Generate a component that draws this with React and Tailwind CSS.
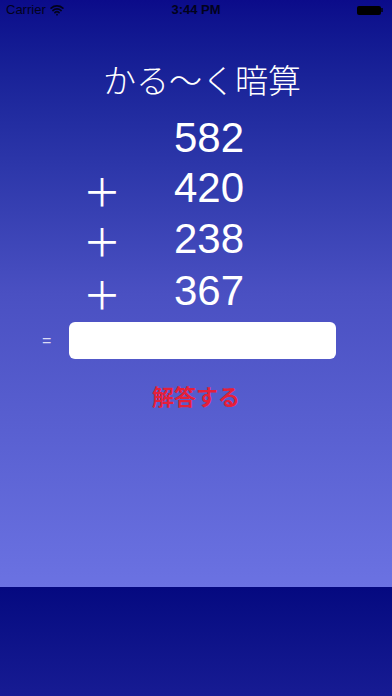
import { Wifi } from 'lucide-react'

const rows = [
  { sign: false, value: '582', h: 'h-[50px]' },
  { sign: true, value: '420', h: 'h-[50px]' },
  { sign: true, value: '238', h: 'h-[51px]' },
  { sign: true, value: '367', h: 'h-[54px]' },
]

const StatusBar = () => (
  <div className="flex h-[20px] items-center justify-between px-[6px] text-[13px] text-black" style={{ fontFamily: '"Liberation Sans", sans-serif' }}>
    <div className="flex w-[100px] items-center gap-[4px]">
      <span className="opacity-80">Carrier</span>
      <Wifi size={14} strokeWidth={3} className="opacity-80" />
    </div>
    <span className="font-semibold opacity-80">3:44 PM</span>
    <div className="flex w-[100px] justify-end pr-[3px]">
      <div className="flex items-center">
        <div className="h-[9px] w-[24px] rounded-[2px] bg-black" />
        <div className="h-[4px] w-[2px] bg-black/70" />
      </div>
    </div>
  </div>
)

export default function App() {
  return (
    <div className="flex h-[696px] w-[392px] flex-col overflow-hidden">
      <div className="flex h-[587px] flex-col bg-gradient-to-b from-[#0b0b8a] via-[#4a50c2] to-[#6b72e2]">
        <StatusBar />
        <h1
          className="mt-[43px] pl-[12px] text-center text-[33px] leading-[32px] text-white"
          style={{ fontFamily: '"Noto Sans CJK JP", sans-serif', fontWeight: 300 }}
        >
          かる〜く暗算
        </h1>
        <div className="mt-[18px] flex flex-col" style={{ fontFamily: '"Liberation Sans", sans-serif' }}>
          {rows.map((r) => (
            <div key={r.value} className={`flex items-center ${r.h}`}>
              <div className="ml-[80px] flex w-[44px] justify-center pt-[3px]">
                {r.sign && (
                  <span className="text-[38px] leading-[44px] text-white" style={{ fontFamily: '"Noto Sans CJK JP", sans-serif', fontWeight: 400 }}>
                    ＋
                  </span>
                )}
              </div>
              <div className="w-[120px] text-right text-[42px] leading-none text-white">{r.value}</div>
            </div>
          ))}
        </div>
        <div className="mt-[4px] flex items-center">
          <span className="ml-[42px] w-[27px] text-[16px] text-[#dcdcf4]" style={{ fontFamily: '"Liberation Sans", sans-serif' }}>=</span>
          <div className="h-[37px] w-[267px] rounded-[6px] bg-white" />
        </div>
        <button
          className="mx-auto mt-[25px] text-[22px] font-bold leading-none text-[#e5203a]"
          style={{ fontFamily: '"Noto Sans CJK JP", sans-serif' }}
        >
          解答する
        </button>
      </div>
      <div className="flex-1 bg-gradient-to-b from-[#050980] to-[#171b93]" />
    </div>
  )
}
